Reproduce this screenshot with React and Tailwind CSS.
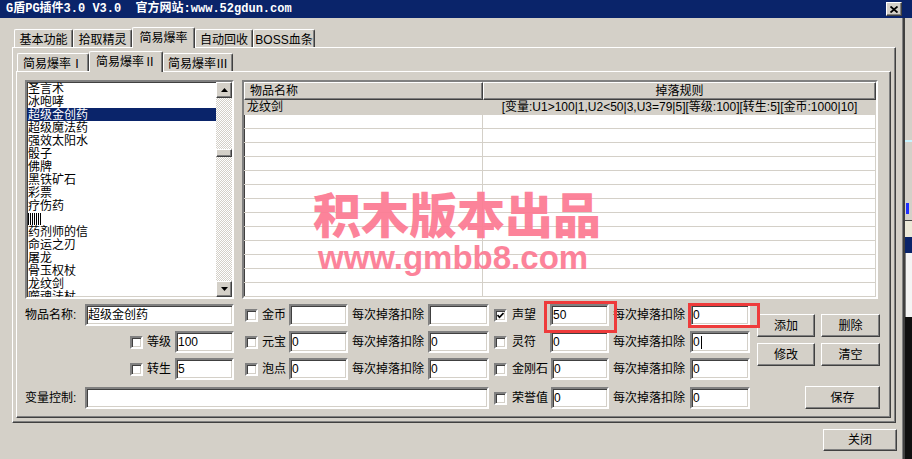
import React from 'react';

const sunken =
  'border-2 border-t-[#808080] border-l-[#808080] border-r-white border-b-white shadow-[inset_1px_1px_0_#404040,inset_-1px_-1px_0_#d4d0c8]';
const raised =
  'border border-t-white border-l-white border-r-[#404040] border-b-[#404040] shadow-[inset_-1px_-1px_0_#808080]';

const items = [
  '圣言术', '冰咆哮', '超级金创药', '超级魔法药', '强效太阳水', '骰子', '佛牌', '黑铁矿石',
  '彩票', '疗伤药', '|', '药剂师的信', '命运之刃', '屠龙', '骨玉权杖', '龙纹剑', '噬魂法杖',
];

function Input({ w, value, cursor, className = '' }) {
  return (
    <div className={`${sunken} ${w} ${className} h-[22px] bg-white flex items-center pl-[1px] overflow-hidden whitespace-nowrap`}>
      {value}
      {cursor && <span className="w-[1px] h-[13px] bg-black ml-[1px]"></span>}
    </div>
  );
}

function Check({ checked }) {
  return (
    <div className={`${sunken} w-[13px] h-[13px] bg-white shrink-0 flex items-center justify-center`}>
      {checked && (
        <svg width="7" height="7" viewBox="0 0 7 7">
          <path d="M0.5 3 L2.5 5.3 L6.5 1" fill="none" stroke="#000" strokeWidth="1.7" />
        </svg>
      )}
    </div>
  );
}

function Btn({ w, h = 'h-[23px]', children }) {
  return (
    <div className={`${raised} ${w} ${h} bg-[#d4d0c8] flex items-center justify-center`}>{children}</div>
  );
}

function Tab({ w, selected, children }) {
  return selected ? (
    <div className={`${w} h-[21px] -mb-[1px] relative z-10 bg-[#d4d0c8] border-t border-l border-t-white border-l-white border-r border-r-[#404040] shadow-[inset_-1px_0_0_#808080] rounded-t-[2px] flex items-start justify-center pt-[3px]`}>
      {children}
    </div>
  ) : (
    <div className={`${w} h-[18px] bg-[#d4d0c8] border-t border-l border-t-white border-l-white border-r border-r-[#404040] shadow-[inset_-1px_0_0_#808080] rounded-t-[2px] flex items-start justify-center pt-[3px]`}>
      {children}
    </div>
  );
}

function Arrow({ down }) {
  return (
    <Btn w="w-[16px]" h="h-[16px]">
      <svg width="7" height="4" viewBox="0 0 7 4">
        <path d={down ? 'M0 0 H7 L3.5 4 Z' : 'M0 4 H7 L3.5 0 Z'} fill="#000" />
      </svg>
    </Btn>
  );
}

export default function App() {
  return (
    <div className="relative w-[912px] h-[459px] flex overflow-hidden bg-[#d4d0c8] text-black font-['Liberation_Sans','Noto_Sans_CJK_SC',sans-serif] text-[12px] leading-[14px]">
      <div className="w-[905px] h-full flex flex-col">
        {/* 标题栏 */}
        <div className="h-[18px] shrink-0 bg-[#0a246a] flex items-center pl-[6px] pr-[3px]">
          <span className="text-white font-bold whitespace-pre text-[12px] font-['Liberation_Mono','Noto_Sans_CJK_SC',monospace]">
            G盾PG插件3.0 V3.0  官方网站:www.52gdun.com
          </span>
          <div className={`${raised} ml-auto w-[16px] h-[14px] bg-[#d4d0c8] flex items-center justify-center`}>
            <svg width="8" height="7" viewBox="0 0 8 7">
              <path d="M0.5 0.5 L7.5 6.5 M7.5 0.5 L0.5 6.5" stroke="#000" strokeWidth="1.8" />
            </svg>
          </div>
        </div>

        <div className="flex-1 flex flex-col pt-[9px] pl-[12px] border-r-2 border-r-[#404040] shadow-[inset_-1px_0_0_#808080]">
          {/* 主选项卡 */}
          <div className="h-[20px] flex items-end pl-[2px]">
            <Tab w="w-[59px]">基本功能</Tab>
            <Tab w="w-[59px]">拾取精灵</Tab>
            <Tab w="w-[63px]" selected>简易爆率</Tab>
            <Tab w="w-[58px]">自动回收</Tab>
            <Tab w="w-[62px]">BOSS血条</Tab>
          </div>

          <div className="w-[884px] h-[376px] border border-t-white border-l-white border-r-[#404040] border-b-[#404040] shadow-[inset_-1px_-1px_0_#808080] pt-[3px] pl-[3px]">
            {/* 子选项卡 */}
            <div className="h-[20px] flex items-end pl-[1px]">
              <Tab w="w-[72px]">简易爆率Ⅰ</Tab>
              <Tab w="w-[74px]" selected>简易爆率Ⅱ</Tab>
              <Tab w="w-[70px]">简易爆率Ⅲ</Tab>
            </div>

            <div className="w-[875px] h-[347px] border border-t-white border-l-white border-r-[#404040] border-b-[#404040] shadow-[inset_-1px_-1px_0_#808080] pt-[8px] pl-[8px]">
              <div className="flex h-[219px] gap-[8px]">
                {/* 物品列表 */}
                <div className={`${sunken} w-[209px] h-[219px] bg-white flex`}>
                  <div className="flex-1 overflow-hidden">
                    {items.map((it, i) => (
                      <div
                        key={i}
                        className={`h-[13px] leading-[12px] pt-[1px] pl-[1px] whitespace-nowrap ${i === 2 ? 'bg-[#0a246a] text-white' : ''}`}
                      >
                        {it === '|' ? (
                          <span className="inline-block w-[13px] h-[12px] bg-[repeating-linear-gradient(90deg,#000_0_1px,transparent_1px_2px)]"></span>
                        ) : (
                          it
                        )}
                      </div>
                    ))}
                  </div>
                  <div className="w-[16px] flex flex-col [background:repeating-conic-gradient(#d4d0c8_0%_25%,#ffffff_0%_50%)_0_0/2px_2px]">
                    <Arrow />
                    <div className="flex-1 pt-[51px]">
                      <div className={`${raised} h-[8px] bg-[#d4d0c8]`}></div>
                    </div>
                    <Arrow down />
                  </div>
                </div>

                {/* 规则列表 */}
                <div className={`${sunken} relative w-[636px] h-[219px] bg-white overflow-hidden flex flex-col`}>
                  <div className="flex h-[18px] shrink-0">
                    <div className={`${raised} w-[239px] bg-[#d4d0c8] pl-[5px] leading-[16px]`}>物品名称</div>
                    <div className={`${raised} flex-1 bg-[#d4d0c8] text-center leading-[16px]`}>掉落规则</div>
                  </div>
                  <div className="flex h-[15px] shrink-0 bg-[#d4d0c8] leading-[15px]">
                    <div className="w-[239px] pl-[3px]">龙纹剑</div>
                    <div className="flex-1 text-center whitespace-nowrap">[变量:U1&gt;100|1,U2&lt;50|3,U3=79|5][等级:100][转生:5][金币:1000|10]</div>
                  </div>
                  {Array.from({ length: 13 }).map((_, i) => (
                    <div key={i} className="flex h-[14px] shrink-0 border-b border-b-[#d4d0c8]">
                      <div className="w-[239px] border-r border-r-[#d4d0c8]"></div>
                      <div className="flex-1"></div>
                    </div>
                  ))}
                  {/* 水印 */}
                  <div className="absolute left-[69px] top-[108px] text-[48px] leading-[44px] font-black text-[#fc7d95] opacity-95 whitespace-nowrap font-['Noto_Sans_CJK_SC',sans-serif]">
                    积木版本出品
                  </div>
                  <div className="absolute left-[74px] top-[161px] text-[33px] leading-[30px] font-bold text-[#fc7d95] opacity-95 whitespace-nowrap font-['Liberation_Sans',sans-serif]">
                    www.gmbb8.com
                  </div>
                </div>
              </div>

              {/* 表单 */}
              <div className="flex mt-[5px]">
                <div className="w-[725px] flex flex-col">
                  <div className="flex h-[22px] items-center">
                    <div className="w-[209px] flex items-center justify-between">
                      <span>物品名称:</span>
                      <Input w="w-[149px]" value="超级金创药" />
                    </div>
                    <div className="w-[103px] ml-[11px] flex items-center">
                      <Check />
                      <span className="ml-[4px]">金币</span>
                      <Input w="w-[59px]" className="ml-auto" value="" />
                    </div>
                    <div className="w-[137px] ml-[4px] flex items-center justify-between">
                      <span>每次掉落扣除</span>
                      <Input w="w-[61px]" value="" />
                    </div>
                    <div className="w-[115px] ml-[5px] flex items-center">
                      <Check checked />
                      <span className="ml-[5px]">声望</span>
                      <Input w="w-[59px]" className="ml-auto" value="50" />
                    </div>
                    <div className="w-[137px] ml-[4px] flex items-center justify-between">
                      <span>每次掉落扣除</span>
                      <Input w="w-[60px]" value="0" />
                    </div>
                  </div>

                  <div className="flex h-[22px] items-center mt-[5px]">
                    <div className="w-[209px] flex items-center justify-end">
                      <Check />
                      <span className="ml-[4px]">等级</span>
                      <Input w="w-[59px]" className="ml-[4px]" value="100" />
                    </div>
                    <div className="w-[103px] ml-[11px] flex items-center">
                      <Check />
                      <span className="ml-[4px]">元宝</span>
                      <Input w="w-[59px]" className="ml-auto" value="0" />
                    </div>
                    <div className="w-[137px] ml-[4px] flex items-center justify-between">
                      <span>每次掉落扣除</span>
                      <Input w="w-[61px]" value="0" />
                    </div>
                    <div className="w-[115px] ml-[5px] flex items-center">
                      <Check />
                      <span className="ml-[5px]">灵符</span>
                      <Input w="w-[59px]" className="ml-auto" value="0" />
                    </div>
                    <div className="w-[137px] ml-[4px] flex items-center justify-between">
                      <span>每次掉落扣除</span>
                      <Input w="w-[60px]" value="0" cursor />
                    </div>
                  </div>

                  <div className="flex h-[22px] items-center mt-[5px]">
                    <div className="w-[209px] flex items-center justify-end">
                      <Check />
                      <span className="ml-[4px]">转生</span>
                      <Input w="w-[59px]" className="ml-[4px]" value="5" />
                    </div>
                    <div className="w-[103px] ml-[11px] flex items-center">
                      <Check />
                      <span className="ml-[4px]">泡点</span>
                      <Input w="w-[59px]" className="ml-auto" value="0" />
                    </div>
                    <div className="w-[137px] ml-[4px] flex items-center justify-between">
                      <span>每次掉落扣除</span>
                      <Input w="w-[61px]" value="0" />
                    </div>
                    <div className="w-[115px] ml-[5px] flex items-center">
                      <Check />
                      <span className="ml-[5px]">金刚石</span>
                      <Input w="w-[58px]" className="ml-auto" value="0" />
                    </div>
                    <div className="w-[137px] ml-[4px] flex items-center justify-between">
                      <span>每次掉落扣除</span>
                      <Input w="w-[60px]" value="0" />
                    </div>
                  </div>

                  <div className="flex h-[22px] items-center mt-[7px]">
                    <div className="w-[464px] flex items-center justify-between">
                      <span>变量控制:</span>
                      <Input w="w-[404px]" value="" />
                    </div>
                    <div className="w-[115px] ml-[5px] flex items-center">
                      <Check />
                      <span className="ml-[5px]">荣誉值</span>
                      <Input w="w-[58px]" className="ml-auto" value="0" />
                    </div>
                    <div className="w-[137px] ml-[4px] flex items-center justify-between">
                      <span>每次掉落扣除</span>
                      <Input w="w-[60px]" value="0" />
                    </div>
                  </div>
                </div>

                {/* 按钮 */}
                <div className="w-[123px] ml-[7px] flex flex-col pt-[10px]">
                  <div className="flex justify-between">
                    <Btn w="w-[58px]">添加</Btn>
                    <Btn w="w-[59px]">删除</Btn>
                  </div>
                  <div className="flex justify-between mt-[6px]">
                    <Btn w="w-[58px]">修改</Btn>
                    <Btn w="w-[59px]">清空</Btn>
                  </div>
                  <div className="flex justify-end mt-[20px]">
                    <Btn w="w-[75px]">保存</Btn>
                  </div>
                </div>
              </div>
            </div>
          </div>

          <div className="w-[885px] flex justify-end mt-[6px]">
            <Btn w="w-[74px]" h="h-[22px]">关闭</Btn>
          </div>
        </div>
      </div>

      {/* 背后桌面 */}
      <div className="w-[7px] h-full flex flex-col">
        <div className="h-[18px] bg-[#0a246a]"></div>
        <div className="h-[122px] bg-[#d4d0c8]"></div>
        <div className="h-[2px] bg-[#c8f4ff]"></div>
        <div className="h-[61px] bg-[#d4d0c8]"></div>
        <div className="h-[11px] bg-[#d4d0c8] pl-[1px]">
          <div className="w-[3px] h-full bg-[#2030ff]"></div>
        </div>
        <div className="h-[6px] bg-[#d4d0c8]"></div>
        <div className="h-[1px] bg-[#404040]"></div>
        <div className="h-[16px] bg-[#ece9d8]"></div>
        <div className="h-[16px] bg-[#0a246a]"></div>
        <div className="h-[64px] bg-[#f4f4f4] border-l border-l-[#808080]"></div>
        <div className="flex-1 bg-[#101010]"></div>
      </div>

      {/* 红框标注 */}
      <div className="absolute left-[544px] top-[301px] w-[73px] h-[32px] border-[3px] border-[#ee3b3b]"></div>
      <div className="absolute left-[688px] top-[303px] w-[72px] h-[25px] border-[3px] border-[#ee3b3b]"></div>
    </div>
  );
}
